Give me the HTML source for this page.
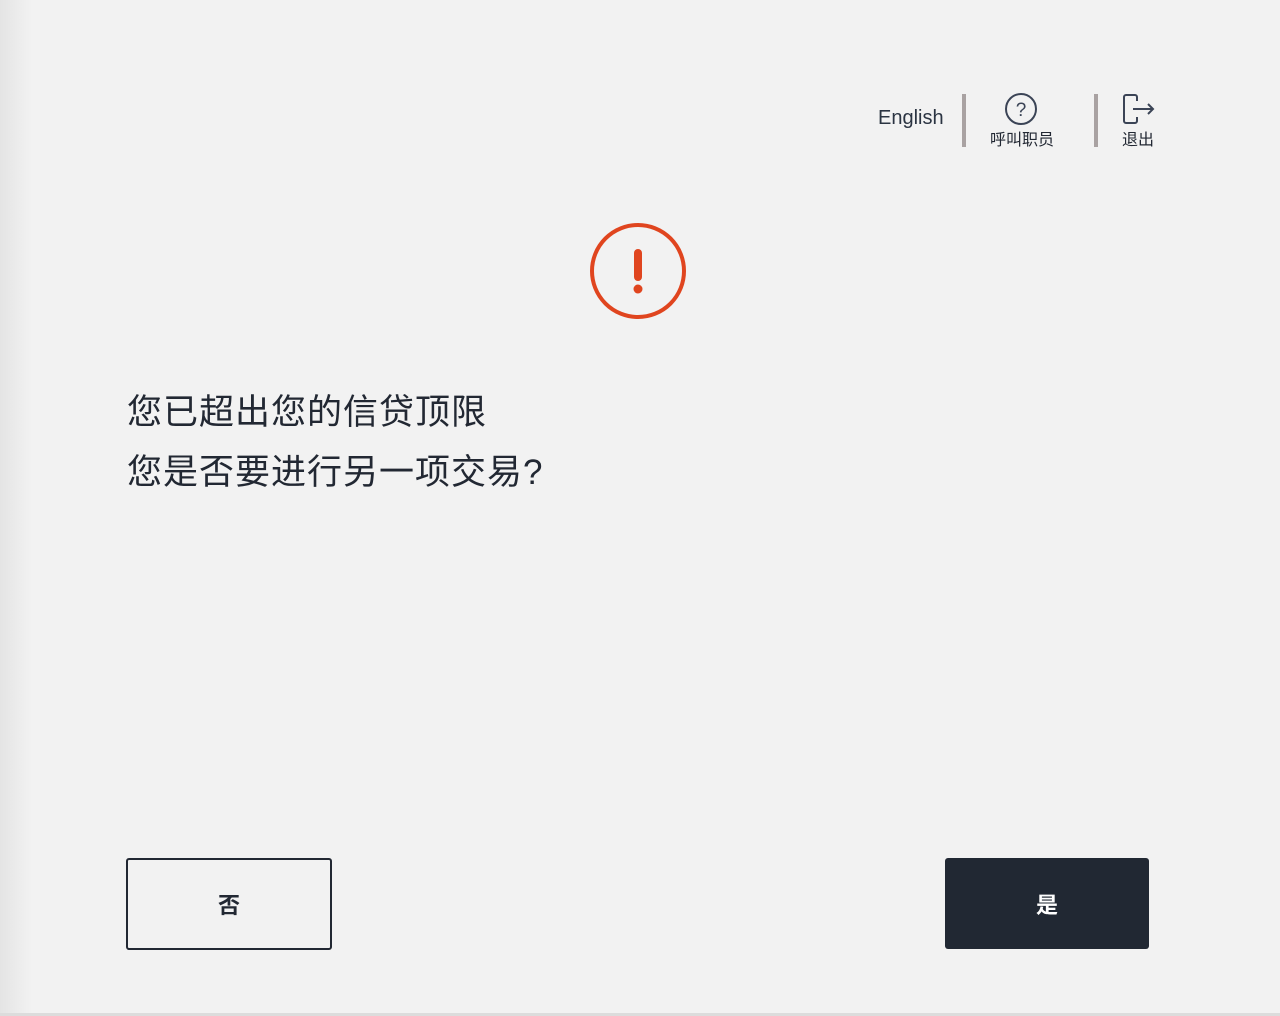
<!DOCTYPE html>
<html><head><meta charset="utf-8"><style>
html,body{margin:0;padding:0}
body{width:1280px;height:1016px;position:relative;overflow:hidden;background:#f2f2f2;font-family:"Liberation Sans","Noto Sans CJK SC",sans-serif;color:#222833}
.edge{position:absolute;left:0;top:0;width:32px;height:1016px;background:linear-gradient(to right,#e4e4e4,#f2f2f2)}
.bottom{position:absolute;left:0;top:1013px;width:1280px;height:3px;background:#dcdcdc}
.en{position:absolute;left:878px;top:107px;font-size:20px;color:#2b3442}
.sep{position:absolute;top:94px;width:4px;height:53px;background:#a9a2a2}
.lbl{position:absolute;top:126px;font-size:16px;color:#222833}
.msg{position:absolute;left:127px;font-size:35px;line-height:40px;color:#222833;letter-spacing:1px}
.btn{position:absolute;top:858px;width:206px;height:92px;box-sizing:border-box;border-radius:3px;display:flex;align-items:center;justify-content:center;font-size:22px;font-weight:bold}
</style></head><body>
<div class="edge"></div>
<div class="bottom"></div>
<div class="en">English</div>
<div class="sep" style="left:962px"></div>
<svg style="position:absolute;left:1003px;top:92px" width="36" height="36" viewBox="0 0 36 36"><circle cx="18" cy="17" r="15" fill="none" stroke="#3b4456" stroke-width="2"/><text x="18" y="24" text-anchor="middle" font-size="19" font-family="Liberation Sans" fill="#3b4456">?</text></svg>
<div class="lbl" style="left:990px">呼叫职员</div>
<div class="sep" style="left:1094px"></div>
<svg style="position:absolute;left:1120px;top:92px" width="38" height="36" viewBox="0 0 38 36"><path d="M17 9V5a2 2 0 0 0-2-2H6a2 2 0 0 0-2 2v24a2 2 0 0 0 2 2h9a2 2 0 0 0 2-2v-4" fill="none" stroke="#3b4456" stroke-width="2"/><path d="M13 17h20M28 12l5 5-5 5" fill="none" stroke="#3b4456" stroke-width="2"/></svg>
<div class="lbl" style="left:1122px">退出</div>
<svg style="position:absolute;left:588px;top:221px" width="100" height="100" viewBox="0 0 100 100"><circle cx="50" cy="50" r="46" fill="none" stroke="#e0451f" stroke-width="4"/><rect x="46" y="28" width="8" height="32" rx="4" fill="#e0451f"/><circle cx="50" cy="68" r="4.5" fill="#e0451f"/></svg>
<div class="msg" style="top:393px">您已超出您的信贷顶限</div>
<div class="msg" style="top:453px">您是否要进行另一项交易?</div>
<div class="btn" style="left:126px;border:2px solid #222833;color:#222833">否</div>
<div class="btn" style="left:945px;width:204px;height:91px;background:#212833;color:#fff">是</div>
</body></html>
